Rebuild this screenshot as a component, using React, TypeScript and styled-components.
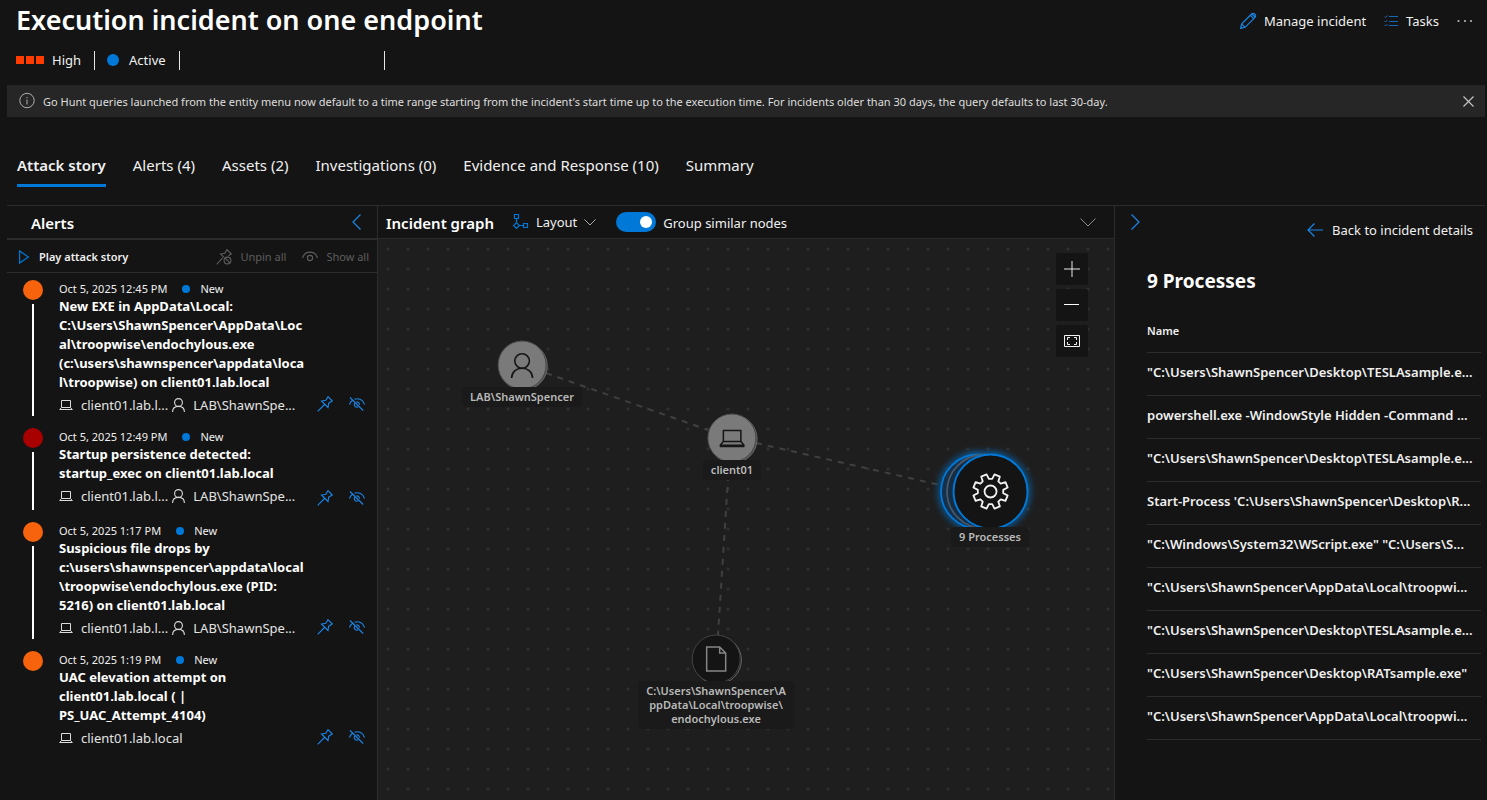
import React from 'react';
import styled, { createGlobalStyle } from 'styled-components';

const c = {
  bg: '#141414',
  line: '#2c2c2c',
  canvas: '#1e1e1e',
  blue: '#0078d7',
  icon: '#1a86e8',
  text: '#f0f0f0',
  muted: '#5e5e5e',
};

const GlobalStyle = createGlobalStyle`
  * { box-sizing: border-box; }
  body {
    margin: 0;
    background: ${c.bg};
    color: ${c.text};
    font-family: 'Noto Sans', 'Open Sans', sans-serif;
    font-size: 13px;
    line-height: 20px;
  }
  button, a { font: inherit; color: inherit; text-decoration: none; }
  button { background: none; border: 0; padding: 0; cursor: pointer; }
  h1, h2, ul, ol { margin: 0; padding: 0; list-style: none; }
  svg { display: block; flex: none; overflow: visible; }
`;

const Page = styled.div`
  display: flex;
  flex-direction: column;
  min-height: 100vh;
  padding: 0 2px 0 7px;
`;

const Header = styled.header`
  display: flex;
  justify-content: space-between;
  align-items: center;
  padding: 0 12px 0 9px;
`;

const Title = styled.h1`
  font-size: 27px;
  line-height: 40px;
  font-weight: 600;
  color: #fff;
`;

const Commands = styled.div`
  display: flex;
  align-items: center;
  gap: 18px;
  padding-top: 2px;
`;

const Command = styled.button`
  display: flex;
  align-items: center;
  gap: 8px;
`;

const StatusRow = styled.div`
  display: flex;
  align-items: center;
  margin-top: 10px;
  padding-left: 9px;
  height: 20px;
`;

const Severity = styled.span`
  display: flex;
  gap: 2px;
  margin-right: 8px;
`;

const SeverityBlock = styled.i`
  width: 8px;
  height: 8px;
  background: #ff3b00;
`;

const Divider = styled.i<{ $before?: number }>`
  width: 1px;
  height: 19px;
  margin: 0 12px 0 ${(p) => p.$before ?? 13}px;
  background: #e6e6e6;
`;

const Dot = styled.i<{ $size: number; $gap: number }>`
  width: ${(p) => p.$size}px;
  height: ${(p) => p.$size}px;
  margin-right: ${(p) => p.$gap}px;
  border-radius: 50%;
  background: ${c.blue};
`;

const Banner = styled.div`
  display: flex;
  align-items: center;
  gap: 8px;
  height: 32px;
  margin-top: 15px;
  padding: 0 11px 0 12px;
  background: #262626;
  color: #dedede;
  font-size: 11px;
`;

const BannerText = styled.span`
  flex: 1;
  padding-top: 2px;
`;

const Tabs = styled.nav`
  display: flex;
  gap: 27px;
  margin-top: 38px;
  padding-left: 10px;
  font-size: 15px;
`;

const Tab = styled.a<{ $active?: boolean }>`
  padding-bottom: 9px;
  border-bottom: 3px solid ${(p) => (p.$active ? c.blue : 'transparent')};
  font-weight: ${(p) => (p.$active ? 600 : 400)};
`;

const Main = styled.main`
  flex: 1;
  display: grid;
  grid-template-columns: 371px minmax(0, 1fr) 371px;
  margin-top: 18px;
  border-top: 1px solid ${c.line};
`;

const AlertsPanel = styled.section`
  border-right: 1px solid ${c.line};
`;

const AlertsHead = styled.div`
  display: flex;
  align-items: center;
  justify-content: space-between;
  height: 34px;
  padding: 0 16px 0 24px;
  border-bottom: 2px solid ${c.line};
`;

const PanelTitle = styled.h2`
  padding-top: 1px;
  font-size: 15px;
  font-weight: 600;
  color: #fff;
`;

const PlayBar = styled.div`
  display: flex;
  align-items: center;
  gap: 16px;
  height: 33px;
  padding: 1px 8px 0 12px;
  border-bottom: 1px solid ${c.line};
  font-size: 11px;
`;

const PlayButton = styled(Command)`
  gap: 10px;
  margin-right: auto;
  font-weight: 600;
`;

const MutedButton = styled(Command)`
  color: ${c.muted};
`;

const AlertList = styled.ol`
  padding: 7px 12px 0 16px;
`;

const AlertItem = styled.li`
  display: grid;
  grid-template-columns: 20px minmax(0, 1fr) auto;
  column-gap: 16px;
  min-height: 82px;
  margin-bottom: 12px;
`;

const Timeline = styled.div`
  display: flex;
  flex-direction: column;
  align-items: center;
  gap: 4px;
`;

const Marker = styled.i<{ $color: string }>`
  width: 20px;
  height: 20px;
  border-radius: 50%;
  background: ${(p) => p.$color};
`;

const Track = styled.i`
  flex: 1;
  width: 2px;
  background: #fff;
`;

const AlertMeta = styled.div`
  display: flex;
  align-items: center;
  height: 17px;
  font-size: 11px;
  line-height: 18px;
`;

const AlertDate = styled.time`
  margin-right: 15px;
`;

const AlertTitle = styled.a`
  display: block;
  margin-right: -40px;
  font-weight: 700;
  line-height: 19px;
  color: #fff;
  white-space: pre-line;
`;

const Entities = styled.div`
  display: flex;
  align-items: center;
  height: 24px;
  margin-right: -30px;
  padding-top: 1px;
`;

const Entity = styled.span`
  display: flex;
  align-items: center;
  gap: 8px;
  margin-right: 4px;
  color: #e4e4e4;
  white-space: nowrap;
`;

const Actions = styled.div`
  display: flex;
  align-self: end;
  gap: 16px;
  padding-bottom: 4px;
`;

const GraphPanel = styled.section`
  display: flex;
  flex-direction: column;
`;

const GraphHead = styled.div`
  display: flex;
  align-items: center;
  height: 33px;
  padding: 0 18px 0 8px;
  border-bottom: 1px solid ${c.line};
`;

const LayoutButton = styled(Command)`
  gap: 7px;
  margin: 0 20px 0 19px;
`;

const Toggle = styled.label`
  display: flex;
  align-items: center;
  gap: 7px;
  flex: 1;
`;

const ToggleText = styled.span`
  padding-top: 2px;
`;

const Switch = styled.input`
  appearance: none;
  display: flex;
  align-items: center;
  justify-content: flex-end;
  width: 40px;
  height: 20px;
  margin: 0;
  padding: 0 4px;
  border-radius: 10px;
  background: ${c.blue};
  &::after {
    content: '';
    width: 12px;
    height: 12px;
    border-radius: 50%;
    background: #fff;
  }
  &:not(:checked) {
    justify-content: flex-start;
    background: #555;
  }
`;

const Canvas = styled.div`
  position: relative;
  flex: 1;
  overflow: hidden;
  background: radial-gradient(circle at 10px 10px, #303030 1px, transparent 2px) 0 0 / 20px 20px ${c.canvas};
`;

const Edges = styled.svg`
  position: absolute;
  inset: 0;
  width: 100%;
  height: 100%;
`;

const Node = styled.div<{ $x: number; $y: number; $size: number }>`
  position: absolute;
  left: ${(p) => p.$x}px;
  top: ${(p) => p.$y - p.$size / 2}px;
  display: flex;
  flex-direction: column;
  align-items: center;
  transform: translateX(-50%);
`;

const NodeLabel = styled.span`
  position: relative;
  min-width: max-content;
  margin-top: -2px;
  padding: 3px 8px;
  border-radius: 4px;
  background: #1a1a1a;
  color: #b9b9b9;
  font-size: 11px;
  font-weight: 600;
  line-height: 14px;
  text-align: center;
  white-space: pre;
`;

const ZoomTools = styled.div`
  position: absolute;
  top: 14px;
  right: 26px;
  display: grid;
  gap: 4px;
`;

const ZoomButton = styled.button`
  display: grid;
  place-items: center;
  width: 32px;
  height: 32px;
  border-radius: 2px;
  background: ${c.bg};
`;

const Details = styled.aside`
  border-left: 1px solid ${c.line};
  padding: 8px 4px 0 16px;
`;

const DetailsHead = styled.div`
  display: flex;
  align-items: flex-start;
  justify-content: space-between;
  padding-right: 8px;
`;

const BackLink = styled.a`
  display: flex;
  align-items: center;
  gap: 9px;
  padding-top: 6px;
`;

const DetailsBody = styled.div`
  padding: 27px 0 0 16px;
`;

const DetailsTitle = styled.h2`
  font-size: 19px;
  line-height: 28px;
  font-weight: 700;
  color: #fff;
`;

const Table = styled.table`
  width: 100%;
  margin-top: 14px;
  table-layout: fixed;
  border-collapse: collapse;
  th, td {
    height: 43px;
    padding: 0 0 4px;
    border-bottom: 1px solid ${c.line};
    overflow: hidden;
    white-space: nowrap;
    text-align: left;
    font-weight: 600;
  }
  th {
    padding: 2px 0 0;
    font-size: 11px;
  }
`;

const stroke = (color: string, width = 1) => ({
  fill: 'none',
  stroke: color,
  strokeWidth: width,
});

const PencilIcon = () => (
  <svg width="16" height="16" viewBox="0 0 16 16" {...stroke(c.icon, 1.2)}>
    <path d="M.6 15.4 1.7 10.9 11.6 1C12.5.2 13.8.2 14.8 1.2S15.8 3.5 15 4.4L5.1 14.3Z" />
    <path d="m10.4 2.3 3.3 3.3M1.8 11.1 4.9 14.2M12 1l3 3" />
  </svg>
);

const TasksIcon = () => (
  <svg width="14" height="12" viewBox="0 0 14 12" {...stroke('#1769b5')}>
    <path d="M5 1.5h9M5 6.5h9M5 10.5h9M.5 1.5l1 1 2-2M.5 6l1 1 2-2M.5 10l1 1 2-2" />
  </svg>
);

const MoreIcon = () => (
  <svg width="16" height="4" viewBox="0 0 16 4" fill="#b5b5b5">
    <circle cx="1.5" cy="2" r="1.1" />
    <circle cx="8" cy="2" r="1.1" />
    <circle cx="14" cy="2" r="1.1" />
  </svg>
);

const InfoIcon = () => (
  <svg width="16" height="16" viewBox="0 0 16 16" {...stroke('#b0b0b0')}>
    <circle cx="8" cy="7.5" r="7.2" />
    <path d="M8 6.5v5M8 4v1.2" />
  </svg>
);

const CloseIcon = () => (
  <svg width="11" height="11" viewBox="0 0 11 11" {...stroke('#c8c8c8', 1.1)}>
    <path d="m.5.5 10 10M10.5.5l-10 10" />
  </svg>
);

const ChevronIcon = ({ dir }: { dir: 'left' | 'right' }) => (
  <svg width="9" height="16" viewBox="0 0 9 16" {...stroke(c.icon, 1.2)}>
    <path d={dir === 'left' ? 'M8.5.5 1 8l7.5 7.5' : 'M.5.5 8 8 .5 15.5'} />
  </svg>
);

const DownIcon = ({ width, color }: { width: number; color: string }) => (
  <svg width={width} height={width / 2} viewBox="0 0 16 8" {...stroke(color, 16 / width)}>
    <path d="m.5.5 7.5 7.5L15.5.5" />
  </svg>
);

const PlayIcon = () => (
  <svg width="10" height="14" viewBox="0 0 10 14" {...stroke(c.blue, 1.2)}>
    <path d="M.6 1v12L9.4 7Z" />
  </svg>
);

const PinIcon = () => (
  <svg width="16" height="16" viewBox="0 0 16 16" {...stroke(c.icon, 1.1)}>
    <path d="M11 .7 15.3 5 11.7 7.2 11 11.5 4.5 5 8.8 4.3ZM7.5 8.5.7 15.3" />
  </svg>
);

const UnpinIcon = () => (
  <svg width="16" height="16" viewBox="0 0 16 16" {...stroke(c.muted, 1.1)}>
    <path d="M8 8.2 4.5 5 8.8 4.3 11 .7 15.3 5 12.5 6.8M6.8 8.7.7 15.3" />
    <circle cx="11.5" cy="11.5" r="3.4" />
    <path d="m9.2 9.2 4.6 4.6" />
  </svg>
);

const EyeIcon = () => (
  <svg width="16" height="12" viewBox="0 0 16 12" {...stroke(c.muted, 1.1)}>
    <path d="M.5 7C3-.8 13-.8 15.5 7" />
    <circle cx="8" cy="7" r="2.6" />
  </svg>
);

const EyeOffIcon = () => (
  <svg width="16" height="16" viewBox="0 0 16 16" {...stroke(c.icon, 1.1)}>
    <path d="M.5 8.5C1 6.5 2 5.2 3.6 4.2M5.5 3.2C9.5 1.7 14.3 3.8 15.5 8.5M1 1.5 14.2 14.5" />
    <path d="M10.4 8.8A2.6 2.6 0 0 0 7.5 5.9M5.7 7A2.6 2.6 0 0 0 9.3 10.6" />
  </svg>
);

const LaptopIcon = () => (
  <svg width="14" height="11" viewBox="0 0 14 11" {...stroke('#dcdcdc')}>
    <path d="M2.5 8.5v-7h9v7ZM2.5 8.5.7 10.5h12.6L11.5 8.5" />
  </svg>
);

const PersonIcon = () => (
  <svg width="13" height="14" viewBox="0 0 13 14" {...stroke('#dcdcdc', 1.1)}>
    <circle cx="6.5" cy="4.5" r="3.9" />
    <path d="M.6 14C.6 10.5 3 8.4 6.5 8.4s5.9 2.1 5.9 5.6" />
  </svg>
);

const LayoutIcon = () => (
  <svg width="16" height="16" viewBox="0 0 16 16" {...stroke(c.blue, 1.2)}>
    <path d="M1.5.5h4v4h-4ZM3.5 4.5v4M3.5 8.6 6.4 11.5 3.5 14.4.6 11.5ZM6.4 11.5h4.1M10.500 9.5h4v4h-4Z" />
  </svg>
);

const BackIcon = () => (
  <svg width="16" height="14" viewBox="0 0 16 14" {...stroke(c.icon, 1.2)}>
    <path d="M16 7H1M7.500.5 1 7l6.500 6.500" />
  </svg>
);

const PlusIcon = () => (
  <svg width="16" height="16" viewBox="0 0 16 16" {...stroke('#e8e8e8')}>
    <path d="M0 8h16M8 0v16" />
  </svg>
);

const MinusIcon = () => (
  <svg width="16" height="16" viewBox="0 0 16 16" {...stroke('#fff')}>
    <path d="M0 7.5h15" />
  </svg>
);

const FitIcon = () => (
  <svg width="16" height="12" viewBox="0 0 16 12" {...stroke('#f4f4f4')}>
    <path d="M.5.5h15v11H.5ZM3.5 5V2.5H6M10 2.5h2.5V5M3.5 7v2.500H6M10 9.500h2.500V7" />
  </svg>
);

const Disc = ({ dark, children }: { dark?: boolean; children: React.ReactNode }) => (
  <svg width="48" height="48" viewBox="0 0 48 48">
    <circle cx="25.2" cy="25" r="24" fill={dark ? '#1b1b1b' : '#555'} stroke={dark ? '#6a6a6a' : '#666'} />
    <circle cx="24" cy="24" r="24" fill={dark ? '#141414' : '#7a7a7a'} stroke={dark ? '#444' : '#4a4a4a'} />
    {children}
  </svg>
);

const polar = (radius: number, degrees: number) => {
  const a = (degrees * Math.PI) / 180;
  return `${(radius * Math.sin(a)).toFixed(2)} ${(-radius * Math.cos(a)).toFixed(2)}`;
};

const gearPath = `M${Array.from({ length: 8 }, (_, i) => 22.5 + 45 * i)
  .flatMap((a) => [polar(12.8, a - 15), polar(17.6, a - 9.5), polar(17.6, a + 9.5), polar(12.8, a + 15)])
  .join('L')}Z`;

const GroupDisc = () => (
  <svg width="76" height="74" viewBox="-38.5 -36.5 76 74">
    <defs>
      <filter id="glow" x="-40%" y="-40%" width="180%" height="180%">
        <feGaussianBlur stdDeviation="3.5" />
      </filter>
    </defs>
    <g filter="url(#glow)" {...stroke(c.blue, 4)}>
      <circle cx="-12.5" r="37" />
      <circle r="37" />
    </g>
    <circle cx="-12.5" r="37" fill="#15304a" stroke={c.blue} strokeWidth="1.8" />
    <circle cx="-6.5" r="37" fill="#142c44" stroke="#47596a" strokeWidth="1.8" />
    <circle r="37" fill="#141414" stroke={c.blue} strokeWidth="2" />
    <path d={gearPath} {...stroke('#f2f2f2', 1.8)} strokeLinejoin="round" />
    <circle r="6" {...stroke('#f2f2f2', 1.8)} />
  </svg>
);

const tabs = ['Attack story', 'Alerts (4)', 'Assets (2)', 'Investigations (0)', 'Evidence and Response (10)', 'Summary'];

const orange = '#f7630c';

const alerts = [
  {
    date: 'Oct 5, 2025 12:45 PM',
    color: orange,
    title:
      'New EXE in AppData\\Local:\nC:\\Users\\ShawnSpencer\\AppData\\Loc\nal\\troopwise\\endochylous.exe\n(c:\\users\\shawnspencer\\appdata\\loca\nl\\troopwise) on client01.lab.local',
    host: 'client01.lab.l...',
    user: 'LAB\\ShawnSpe...',
  },
  {
    date: 'Oct 5, 2025 12:49 PM',
    color: '#a80000',
    title: 'Startup persistence detected:\nstartup_exec on client01.lab.local',
    host: 'client01.lab.l...',
    user: 'LAB\\ShawnSpe...',
  },
  {
    date: 'Oct 5, 2025 1:17 PM',
    color: orange,
    title:
      'Suspicious file drops by\nc:\\users\\shawnspencer\\appdata\\local\n\\troopwise\\endochylous.exe (PID:\n5216) on client01.lab.local',
    host: 'client01.lab.l...',
    user: 'LAB\\ShawnSpe...',
  },
  {
    date: 'Oct 5, 2025 1:19 PM',
    color: orange,
    title: 'UAC elevation attempt on\nclient01.lab.local ( |\nPS_UAC_Attempt_4104)',
    host: 'client01.lab.local',
    user: '',
  },
];

const processes = [
  '"C:\\Users\\ShawnSpencer\\Desktop\\TESLAsample.e...',
  'powershell.exe -WindowStyle Hidden -Command ...',
  '"C:\\Users\\ShawnSpencer\\Desktop\\TESLAsample.e...',
  "Start-Process 'C:\\Users\\ShawnSpencer\\Desktop\\R...",
  '"C:\\Windows\\System32\\WScript.exe" "C:\\Users\\S...',
  '"C:\\Users\\ShawnSpencer\\AppData\\Local\\troopwi...',
  '"C:\\Users\\ShawnSpencer\\Desktop\\TESLAsample.e...',
  '"C:\\Users\\ShawnSpencer\\Desktop\\RATsample.exe"',
  '"C:\\Users\\ShawnSpencer\\AppData\\Local\\troopwi...',
];

const filePath = 'C:\\Users\\ShawnSpencer\\A\nppData\\Local\\troopwise\\\nendochylous.exe';

export default function App() {
  return (
    <Page>
      <GlobalStyle />
      <Header>
        <Title>Execution incident on one endpoint</Title>
        <Commands>
          <Command><PencilIcon />Manage incident</Command>
          <Command><TasksIcon />Tasks</Command>
          <Command aria-label="More"><MoreIcon /></Command>
        </Commands>
      </Header>
      <StatusRow>
        <Severity><SeverityBlock /><SeverityBlock /><SeverityBlock /></Severity>
        High
        <Divider />
        <Dot $size={12} $gap={10} />
        Active
        <Divider />
        <Divider $before={192} />
      </StatusRow>
      <Banner>
        <InfoIcon />
        <BannerText>
          Go Hunt queries launched from the entity menu now default to a time range starting from the incident's start
          time up to the execution time. For incidents older than 30 days, the query defaults to last 30-day.
        </BannerText>
        <button aria-label="Dismiss"><CloseIcon /></button>
      </Banner>
      <Tabs>
        {tabs.map((t, i) => (
          <Tab key={t} href="#" $active={i === 0}>{t}</Tab>
        ))}
      </Tabs>
      <Main>
        <AlertsPanel>
          <AlertsHead>
            <PanelTitle>Alerts</PanelTitle>
            <button aria-label="Collapse alerts"><ChevronIcon dir="left" /></button>
          </AlertsHead>
          <PlayBar>
            <PlayButton><PlayIcon />Play attack story</PlayButton>
            <MutedButton><UnpinIcon />Unpin all</MutedButton>
            <MutedButton><EyeIcon />Show all</MutedButton>
          </PlayBar>
          <AlertList>
            {alerts.map((a, i) => (
              <AlertItem key={a.date}>
                <Timeline>
                  <Marker $color={a.color} />
                  {i < alerts.length - 1 && <Track />}
                </Timeline>
                <div>
                  <AlertMeta>
                    <AlertDate>{a.date}</AlertDate>
                    <Dot $size={8} $gap={10} />
                    New
                  </AlertMeta>
                  <AlertTitle href="#">{a.title}</AlertTitle>
                  <Entities>
                    <Entity><LaptopIcon />{a.host}</Entity>
                    {a.user && <Entity><PersonIcon />{a.user}</Entity>}
                  </Entities>
                </div>
                <Actions>
                  <button aria-label="Pin"><PinIcon /></button>
                  <button aria-label="Hide"><EyeOffIcon /></button>
                </Actions>
              </AlertItem>
            ))}
          </AlertList>
        </AlertsPanel>
        <GraphPanel>
          <GraphHead>
            <PanelTitle>Incident graph</PanelTitle>
            <LayoutButton><LayoutIcon />Layout<DownIcon width={12} color="#a8a8a8" /></LayoutButton>
            <Toggle>
              <Switch type="checkbox" role="switch" defaultChecked />
              <ToggleText>Group similar nodes</ToggleText>
            </Toggle>
            <button aria-label="Collapse graph"><DownIcon width={16} color="#8c8c8c" /></button>
          </GraphHead>
          <Canvas>
            <Edges stroke="#404040" strokeWidth="2" strokeDasharray="6 6">
              <path d="M168 134 330 191M378 204 562 246M351 224 340 396" />
            </Edges>
            <Node $x={144} $y={126} $size={48}>
              <Disc>
                <g {...stroke('#151515', 1.6)}>
                  <circle cx="24" cy="20" r="7.3" />
                  <path d="M13.5 37c.3-6 4.5-9.7 10.5-9.7S34.200 31 34.500 37" />
                </g>
              </Disc>
              <NodeLabel>LAB\ShawnSpencer</NodeLabel>
            </Node>
            <Node $x={354} $y={199} $size={48}>
              <Disc>
                <g {...stroke('#151515', 1.5)} strokeLinejoin="round">
                  <path d="M15.5 27.5V16.5h17.5v11ZM15.5 27.5l-3 3.5v1.5h23.5V31l-3-3.5M12.5 31.2h23.5" />
                </g>
              </Disc>
              <NodeLabel>client01</NodeLabel>
            </Node>
            <Node $x={338} $y={420} $size={48}>
              <Disc dark>
                <path d="M14.5 12h13l6 6v18h-19ZM27.5 12v6h6" {...stroke('#858585', 1.5)} />
              </Disc>
              <NodeLabel>{filePath}</NodeLabel>
            </Node>
            <Node $x={612} $y={253} $size={74}>
              <GroupDisc />
              <NodeLabel>9 Processes</NodeLabel>
            </Node>
            <ZoomTools>
              <ZoomButton aria-label="Zoom in"><PlusIcon /></ZoomButton>
              <ZoomButton aria-label="Zoom out"><MinusIcon /></ZoomButton>
              <ZoomButton aria-label="Fit to view"><FitIcon /></ZoomButton>
            </ZoomTools>
          </Canvas>
        </GraphPanel>
        <Details>
          <DetailsHead>
            <button aria-label="Collapse details"><ChevronIcon dir="right" /></button>
            <BackLink href="#"><BackIcon />Back to incident details</BackLink>
          </DetailsHead>
          <DetailsBody>
            <DetailsTitle>9 Processes</DetailsTitle>
            <Table>
              <thead>
                <tr><th scope="col">Name</th></tr>
              </thead>
              <tbody>
                {processes.map((p, i) => (
                  <tr key={i}><td>{p}</td></tr>
                ))}
              </tbody>
            </Table>
          </DetailsBody>
        </Details>
      </Main>
    </Page>
  );
}
